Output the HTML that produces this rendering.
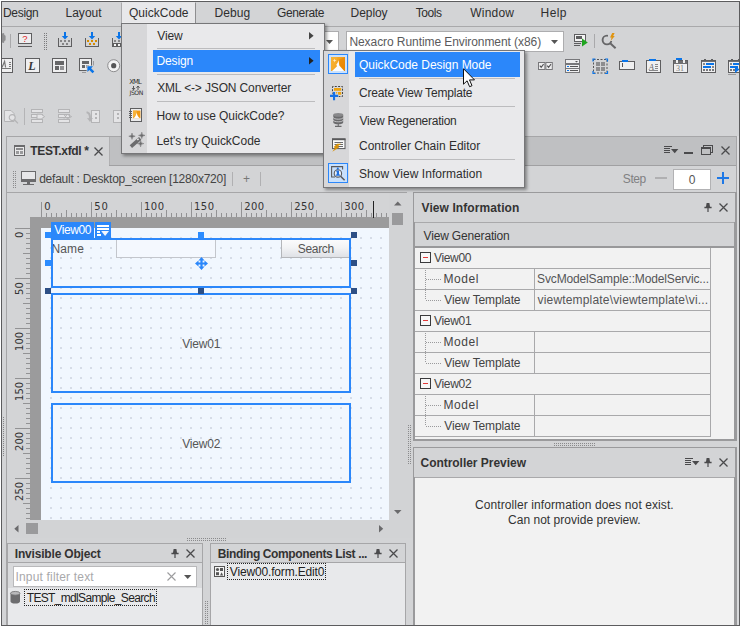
<!DOCTYPE html>
<html lang="en"><head><meta charset="utf-8"><title>Nexacro Studio - QuickCode</title>
<style>
html,body{margin:0;padding:0;}
body{width:740px;height:626px;overflow:hidden;background:#d3d4d6;position:relative;font-family:"Liberation Sans", sans-serif;}
#r{position:absolute;left:0;top:0;width:740px;height:626px;overflow:hidden;}
#r div,#r span.t,#r svg{position:absolute;box-sizing:content-box;}
#r span.t{white-space:nowrap;display:block;}
#r svg{overflow:visible;}
</style></head>
<body><div id="r">
<div style="left:0px;top:26px;width:740px;height:1px;background:#a9a9ab;"></div>
<div style="left:121px;top:2px;width:75px;height:21px;background:#e8e8ea;border-left:1px solid #a9a9ab;border-right:1px solid #8e8e90;border-top:1px solid #e4e4e6;width:73px;height:20px"></div>
<div style="left:122px;top:22px;width:73px;height:1px;background:#f0f0f2;"></div>
<span class="t" style="left:3.02px;top:5px;font-size:12px;line-height:16px;font-weight:400;color:#2e2e2e;letter-spacing:-0.319px;">Design</span>
<span class="t" style="left:65.42px;top:5px;font-size:12px;line-height:16px;font-weight:400;color:#2e2e2e;letter-spacing:0.048px;">Layout</span>
<span class="t" style="left:129.03px;top:5px;font-size:12px;line-height:16px;font-weight:400;color:#2e2e2e;letter-spacing:0.016px;">QuickCode</span>
<span class="t" style="left:214.42px;top:5px;font-size:12px;line-height:16px;font-weight:400;color:#2e2e2e;letter-spacing:0.096px;">Debug</span>
<span class="t" style="left:277.00px;top:5px;font-size:12px;line-height:16px;font-weight:400;color:#2e2e2e;letter-spacing:-0.359px;">Generate</span>
<span class="t" style="left:350.62px;top:5px;font-size:12px;line-height:16px;font-weight:400;color:#2e2e2e;letter-spacing:-0.070px;">Deploy</span>
<span class="t" style="left:415.73px;top:5px;font-size:12px;line-height:16px;font-weight:400;color:#2e2e2e;letter-spacing:-0.428px;">Tools</span>
<span class="t" style="left:470.35px;top:5px;font-size:12px;line-height:16px;font-weight:400;color:#2e2e2e;letter-spacing:0.187px;">Window</span>
<span class="t" style="left:540.62px;top:5px;font-size:12px;line-height:16px;font-weight:400;color:#2e2e2e;letter-spacing:0.400px;">Help</span>
<svg style="left:2px;top:33px;" width="4" height="10" viewBox="0 0 4 10"><path d="M0 0.5L2 0L2.4 2L3.6 2.8V7.2L2.4 8L2 10L0 9.5Z" fill="#8f8f91"/></svg>
<div style="left:10px;top:34px;width:1px;height:14px;background:#a9a9ab;"></div>
<div style="left:18px;top:33px;width:12px;height:9px;background:#efeff0;border:1px solid #5e5e60;"></div>
<span class="t" style="left:22.21px;top:32px;font-size:9.5px;line-height:13px;font-weight:400;color:#e02828;letter-spacing:0.000px;">?</span>
<div style="left:18px;top:46px;width:14px;height:1px;background:#5e5e60;"></div>
<svg style="left:44px;top:33px" width="4" height="18" viewBox="0 0 4 18"><defs><pattern id="tg1" width="2" height="2" patternUnits="userSpaceOnUse"><rect width="1" height="1" fill="#7a7a7c"/></pattern></defs><rect width="4" height="18" fill="url(#tg1)" shape-rendering="crispEdges"/></svg>
<svg style="left:58px;top:32px;" width="14" height="15" viewBox="0 0 14 15"><path d="M0.5 6V14.5H13.5V6" fill="none" stroke="#5e5e60" stroke-width="1" shape-rendering="crispEdges"/><path d="M6 0H8V4H10.2L7 7.4L3.8 4H6Z" fill="#0a74e8"/><rect x="2" y="8" width="2" height="2" fill="#858587" shape-rendering="crispEdges"/><rect x="6" y="8" width="2" height="2" fill="#858587" shape-rendering="crispEdges"/><rect x="10" y="8" width="2" height="2" fill="#858587" shape-rendering="crispEdges"/><rect x="4" y="11" width="2" height="2" fill="#858587" shape-rendering="crispEdges"/><rect x="8" y="11" width="2" height="2" fill="#858587" shape-rendering="crispEdges"/></svg>
<svg style="left:85px;top:32px;" width="14" height="15" viewBox="0 0 14 15"><path d="M0.5 6V14.5H13.5V6" fill="none" stroke="#5e5e60" stroke-width="1" shape-rendering="crispEdges"/><path d="M6 0H8V4H10.2L7 7.4L3.8 4H6Z" fill="#0a74e8"/><rect x="2" y="8" width="2" height="2" fill="#d68c00" shape-rendering="crispEdges"/><rect x="6" y="8" width="2" height="2" fill="#d68c00" shape-rendering="crispEdges"/><rect x="10" y="8" width="2" height="2" fill="#d68c00" shape-rendering="crispEdges"/><rect x="4" y="11" width="2" height="2" fill="#d68c00" shape-rendering="crispEdges"/><rect x="8" y="11" width="2" height="2" fill="#d68c00" shape-rendering="crispEdges"/></svg>
<svg style="left:112px;top:32px;" width="14" height="15" viewBox="0 0 14 15"><path d="M0.5 6V14.5H13.5V6" fill="none" stroke="#5e5e60" stroke-width="1" shape-rendering="crispEdges"/><path d="M6 0H8V4H10.2L7 7.4L3.8 4H6Z" fill="#0a74e8"/><rect x="2" y="8" width="2" height="2" fill="#858587" shape-rendering="crispEdges"/><rect x="6" y="8" width="2" height="2" fill="#858587" shape-rendering="crispEdges"/><rect x="10" y="8" width="2" height="2" fill="#858587" shape-rendering="crispEdges"/><rect x="0" y="11" width="14" height="4" fill="#5e5e60" shape-rendering="crispEdges"/><rect x="2" y="12" width="2" height="2" fill="#f4f4f4" shape-rendering="crispEdges"/><rect x="6" y="12" width="2" height="2" fill="#f4f4f4" shape-rendering="crispEdges"/><rect x="10" y="12" width="2" height="2" fill="#f4f4f4" shape-rendering="crispEdges"/></svg>
<div style="left:300px;top:31px;width:37px;height:19px;background:#fff;border:1px solid #adadaf;"></div>
<svg style="left:326px;top:40px;" width="7" height="4" viewBox="0 0 7 4"><path d="M0 0H7L3.5 4Z" fill="#555"/></svg>
<div style="left:346px;top:31px;width:216px;height:19px;background:#fff;border:1px solid #adadaf;"></div>
<span class="t" style="left:349.42px;top:34px;font-size:12px;line-height:16px;font-weight:400;color:#5a5a5c;letter-spacing:-0.073px;">Nexacro Runtime Environment (x86)</span>
<svg style="left:551px;top:40px;" width="7" height="4" viewBox="0 0 7 4"><path d="M0 0H7L3.5 4Z" fill="#555"/></svg>
<svg style="left:574px;top:34px;" width="14" height="13" viewBox="0 0 14 13"><rect x="0.5" y="0.5" width="11" height="7" fill="#f4f4f4" stroke="#5e5e60" shape-rendering="crispEdges"/><rect x="2" y="2" width="6" height="3" fill="#5e5e60" shape-rendering="crispEdges"/><rect x="0" y="9" width="7" height="1" fill="#5e5e60" shape-rendering="crispEdges"/><rect x="0" y="11" width="6" height="1" fill="#5e5e60" shape-rendering="crispEdges"/><path d="M8 4.6L13.8 8.6L8 12.6Z" fill="#1fa51f"/></svg>
<div style="left:594px;top:34px;width:1px;height:14px;background:#a9a9ab;"></div>
<svg style="left:601px;top:33px;" width="16" height="16" viewBox="0 0 16 16"><circle cx="6" cy="7" r="4.4" fill="none" stroke="#666668" stroke-width="1.9"/><path d="M9.2 10.2L14.6 15.2" stroke="#666668" stroke-width="2"/><rect x="7" y="0" width="7" height="8" fill="#d3d4d6"/><path d="M11.2 0H13.6L12.2 3H13.8L9.6 8L10.6 4.4H9Z" fill="#e09410"/></svg>
<div style="left:2px;top:58px;width:10px;height:13px;border:1px solid #5e5e60;border-left:none;background:#efeff0;"></div>
<svg style="left:2px;top:58px;" width="11" height="15" viewBox="0 0 11 15"><path d="M0 9.5L2.6 3.4L3.6 9.5" fill="none" stroke="#777" stroke-width="1.2"/><path d="M6.5 4.5H9M6.5 6.5H9M6.5 8.5H9M0 10.5H9" stroke="#777" stroke-width="1" shape-rendering="crispEdges"/></svg>
<div style="left:25px;top:58px;width:13px;height:13px;background:#efeff0;border:1px solid #5e5e60;"></div>
<span class="t" style="left:28.30px;top:58px;font-size:12px;line-height:16px;font-weight:700;color:#38383a;letter-spacing:0.000px;font-family:'Liberation Serif',serif;font-style:italic;">L</span>
<div style="left:52px;top:58px;width:13px;height:13px;background:#efeff0;border:1px solid #5e5e60;"></div>
<svg style="left:52px;top:58px;" width="15" height="15" viewBox="0 0 15 15"><rect x="3" y="3" width="9" height="4" fill="#666668" shape-rendering="crispEdges"/><rect x="3" y="8" width="4" height="4" fill="#666668" shape-rendering="crispEdges"/><rect x="8" y="8" width="4" height="4" fill="#929294" shape-rendering="crispEdges"/></svg>
<div style="left:79px;top:58px;width:11px;height:11px;background:#efeff0;border:1px solid #5e5e60;"></div>
<svg style="left:79px;top:58px;" width="16" height="16" viewBox="0 0 16 16"><rect x="3" y="3" width="7" height="3" fill="#666668" shape-rendering="crispEdges"/><rect x="3" y="7" width="3" height="3" fill="#666668" shape-rendering="crispEdges"/><rect x="7" y="7" width="3" height="3" fill="#929294" shape-rendering="crispEdges"/><path d="M14.5 3V8M3 14.5H7" stroke="#9a9a9c" stroke-width="1" shape-rendering="crispEdges"/><path d="M8.4 8.3H14L12.1 10.2L15.3 13.4L13.5 15.2L10.3 12L8.4 13.9Z" fill="#0a74e8" stroke="#d3d4d6" stroke-width="1.6" paint-order="stroke"/></svg>
<svg style="left:107px;top:59px;" width="14" height="14" viewBox="0 0 14 14"><circle cx="6.7" cy="6.7" r="6" fill="#f2f2f3" stroke="#8d8d8f" stroke-width="1"/><circle cx="6.7" cy="6.7" r="2.6" fill="#555557"/></svg>
<svg style="left:538px;top:62px;" width="15" height="8" viewBox="0 0 15 8"><rect x="0.5" y="0.5" width="6.4" height="7" fill="#efeff0" stroke="#77777a"/><rect x="7.9" y="0.5" width="6.4" height="7" fill="#efeff0" stroke="#77777a"/><path d="M1.8 3.6L3.2 5.4L5.6 2.2M9.2 3.6L10.6 5.4L13 2.2" fill="none" stroke="#555557" stroke-width="1.1"/></svg>
<svg style="left:565px;top:59px;" width="15" height="14" viewBox="0 0 15 14"><rect x="0.5" y="0.5" width="14" height="4" fill="#efeff0" stroke="#77777a" shape-rendering="crispEdges"/><rect x="0.5" y="5.5" width="14" height="4" fill="#efeff0" stroke="#77777a" shape-rendering="crispEdges"/><rect x="0.5" y="9.5" width="14" height="4" fill="#efeff0" stroke="#77777a" shape-rendering="crispEdges"/><path d="M10 2H13L11.5 3.6Z" fill="#555557"/><rect x="2" y="7" width="2" height="1" fill="#0a74e8" shape-rendering="crispEdges"/><rect x="5" y="7" width="8" height="1" fill="#555557" shape-rendering="crispEdges"/><rect x="2" y="11" width="2" height="1" fill="#0a74e8" shape-rendering="crispEdges"/><rect x="5" y="11" width="8" height="1" fill="#555557" shape-rendering="crispEdges"/></svg>
<svg style="left:593px;top:59px;" width="15" height="15" viewBox="0 0 15 15"><rect x="0.5" y="0.5" width="13.5" height="13.5" fill="none" stroke="#555557" stroke-width="1" stroke-dasharray="2 1.5"/><path d="M0 2.4V0H2.4M12.1 0H14.5V2.4M14.5 12.1V14.5H12.1M2.4 14.5H0V12.1" fill="none" stroke="#0a74e8" stroke-width="1.2"/><rect x="2.6" y="2.6" width="4" height="4" fill="#8d8d8f" shape-rendering="crispEdges"/><rect x="8" y="2.6" width="4" height="4" fill="#8d8d8f" shape-rendering="crispEdges"/><rect x="2.6" y="8" width="4" height="4" fill="#8d8d8f" shape-rendering="crispEdges"/><rect x="8" y="8" width="4" height="4" fill="#8d8d8f" shape-rendering="crispEdges"/></svg>
<div style="left:619px;top:61px;width:14px;height:7px;background:#efeff0;border:1px solid #5e5e60;"></div>
<div style="left:622px;top:60px;width:6px;height:2px;background:#0a74e8;"></div>
<div style="left:622px;top:63px;width:1px;height:4px;background:#555557;"></div>
<div style="left:646px;top:60px;width:13px;height:11px;background:#efeff0;border:1px solid #5e5e60;"></div>
<div style="left:649px;top:59px;width:7px;height:2px;background:#0a74e8;"></div>
<span class="t" style="left:648.70px;top:61px;font-size:8.5px;line-height:12px;font-weight:400;color:#6a6a6c;letter-spacing:0.000px;font-family:'Liberation Serif',serif;font-style:italic;">A</span>
<svg style="left:646px;top:60px;" width="15" height="13" viewBox="0 0 15 13"><path d="M9 4.5H12M9 6.5H12M9 8.5H12M3 10.5H12" stroke="#88888a" stroke-width="1" shape-rendering="crispEdges"/></svg>
<div style="left:673px;top:60px;width:13px;height:11px;background:#efeff0;border:1px solid #5e5e60;"></div>
<div style="left:674px;top:61px;width:13px;height:3px;background:#707072;"></div>
<div style="left:676px;top:58px;width:6px;height:2px;background:#0a74e8;"></div>
<div style="left:676px;top:60px;width:2px;height:3px;background:#f0f0f0;"></div>
<div style="left:683px;top:60px;width:2px;height:3px;background:#f0f0f0;"></div>
<span class="t" style="left:676.10px;top:63px;font-size:8px;line-height:11px;font-weight:400;color:#77777a;letter-spacing:0.000px;font-family:'Liberation Serif',serif;">31</span>
<div style="left:701px;top:60px;width:13px;height:11px;background:#efeff0;border:1px solid #5e5e60;"></div>
<div style="left:702px;top:61px;width:13px;height:1px;background:#707072;"></div>
<div style="left:704px;top:59px;width:2px;height:2px;background:#5e5e60;"></div>
<div style="left:711px;top:59px;width:2px;height:2px;background:#5e5e60;"></div>
<div style="left:706px;top:63px;width:8px;height:2px;background:#0a74e8;"></div>
<div style="left:703px;top:66px;width:8px;height:2px;background:#0a74e8;"></div>
<div style="left:703px;top:63px;width:2px;height:2px;background:#88888a;"></div>
<div style="left:712px;top:66px;width:2px;height:2px;background:#88888a;"></div>
<div style="left:703px;top:69px;width:2px;height:2px;background:#77777a;"></div>
<div style="left:706px;top:69px;width:2px;height:2px;background:#77777a;"></div>
<div style="left:709px;top:69px;width:2px;height:2px;background:#77777a;"></div>
<div style="left:712px;top:69px;width:2px;height:2px;background:#77777a;"></div>
<div style="left:728px;top:60px;width:13px;height:11px;background:#efeff0;border:1px solid #5e5e60;"></div>
<div style="left:729px;top:61px;width:13px;height:1px;background:#707072;"></div>
<div style="left:731px;top:59px;width:2px;height:2px;background:#5e5e60;"></div>
<div style="left:738px;top:59px;width:2px;height:2px;background:#5e5e60;"></div>
<div style="left:733px;top:63px;width:8px;height:2px;background:#0a74e8;"></div>
<div style="left:730px;top:66px;width:8px;height:2px;background:#0a74e8;"></div>
<div style="left:730px;top:63px;width:2px;height:2px;background:#88888a;"></div>
<div style="left:739px;top:66px;width:2px;height:2px;background:#88888a;"></div>
<div style="left:730px;top:69px;width:2px;height:2px;background:#77777a;"></div>
<div style="left:733px;top:69px;width:2px;height:2px;background:#77777a;"></div>
<div style="left:736px;top:69px;width:2px;height:2px;background:#77777a;"></div>
<div style="left:739px;top:69px;width:2px;height:2px;background:#77777a;"></div>
<div style="left:728px;top:74px;width:8px;height:1px;background:#9a9a9c;"></div>
<svg style="left:734px;top:66px;" width="6" height="7" viewBox="0 0 6 7"><path d="M1 0L5.5 3.5L1 7Z" fill="#0a74e8"/></svg>
<svg style="left:4px;top:109px;" width="15" height="15" viewBox="0 0 15 15"><path d="M0.5 1.5H7L10 4.5V12.5H0.5Z" fill="#e4e4e6" stroke="#b4b4b6"/><circle cx="8.2" cy="8.6" r="3" fill="#e4e4e6" stroke="#b4b4b6" stroke-width="1.1"/><path d="M10.4 10.8L14 14.4" stroke="#b4b4b6" stroke-width="1.3"/></svg>
<div style="left:24px;top:108px;width:1px;height:17px;background:#b4b4b6;"></div>
<svg style="left:31px;top:109px;" width="15" height="14" viewBox="0 0 15 14"><rect x="0.5" y="0.5" width="11" height="3" fill="#e4e4e6" stroke="#b4b4b6" shape-rendering="crispEdges"/><rect x="0.5" y="5.5" width="11" height="3" fill="#e4e4e6" stroke="#b4b4b6" shape-rendering="crispEdges"/><rect x="0.5" y="10.5" width="11" height="3" fill="#e4e4e6" stroke="#b4b4b6" shape-rendering="crispEdges"/><path d="M6 5.2H10.2L13.6 7.6L10.2 10H6Z" fill="#e4e4e6" stroke="#b4b4b6"/></svg>
<svg style="left:58px;top:109px;" width="15" height="14" viewBox="0 0 15 14"><rect x="0.5" y="0.5" width="11" height="3" fill="#e4e4e6" stroke="#b4b4b6" shape-rendering="crispEdges"/><rect x="0.5" y="5.5" width="11" height="3" fill="#e4e4e6" stroke="#b4b4b6" shape-rendering="crispEdges"/><rect x="0.5" y="10.5" width="11" height="3" fill="#e4e4e6" stroke="#b4b4b6" shape-rendering="crispEdges"/><path d="M6 5.6L9 9.6M9 5.6L6 9.6M9 5.2L13.6 7.6L9 10" fill="none" stroke="#b4b4b6"/></svg>
<svg style="left:86px;top:110px;" width="14" height="13" viewBox="0 0 14 13"><rect x="5.5" y="0.5" width="7.5" height="12" fill="#e4e4e6" stroke="#b4b4b6" shape-rendering="crispEdges"/><path d="M0.5 1.5C3.5 1.5 5 3.6 5 8.2L7 8L4 12L1 8L3 8.2C3 5 2.4 3.4 0.5 3.2Z" fill="#b4b4b6"/><rect x="9" y="3" width="2" height="2" fill="#b4b4b6"/><rect x="9" y="7" width="2" height="2" fill="#b4b4b6"/></svg>
<svg style="left:113px;top:110px;" width="9" height="13" viewBox="0 0 9 13"><rect x="0.5" y="0.5" width="9" height="12" fill="#e4e4e6" stroke="#b4b4b6" shape-rendering="crispEdges"/><rect x="4" y="3" width="2" height="2" fill="#b4b4b6"/><rect x="4" y="7" width="2" height="2" fill="#b4b4b6"/></svg>
<div style="left:6px;top:136px;width:731px;height:1px;background:#a6a6a8;"></div>
<div style="left:6px;top:136px;width:1px;height:490px;background:#a6a6a8;"></div>
<div style="left:110px;top:137px;width:627px;height:29px;background:#bfc0c2;"></div>
<div style="left:109px;top:137px;width:1px;height:29px;background:#b0b0b2;"></div>
<div style="left:109px;top:165px;width:628px;height:1px;background:#a0a0a2;"></div>
<div style="left:736px;top:136px;width:1px;height:57px;background:#a6a6a8;"></div>
<div style="left:737px;top:136px;width:2px;height:57px;background:#dcdcde;"></div>
<div style="left:7px;top:192px;width:400px;height:1px;background:#a6a6a8;"></div>
<span class="t" style="left:30.27px;top:143px;font-size:12px;line-height:16px;font-weight:700;color:#333;letter-spacing:-0.327px;">TEST.xfdl *</span>
<div style="left:14px;top:145px;width:9px;height:9px;background:#e9e9ea;border:1px solid #6a6a6c;"></div>
<div style="left:14px;top:146px;width:11px;height:1px;background:#6a6a6c;"></div>
<div style="left:16px;top:148px;width:7px;height:2px;background:#8a8a8c;"></div>
<div style="left:16px;top:151px;width:3px;height:3px;background:#9a9a9c;"></div>
<div style="left:20px;top:151px;width:3px;height:3px;background:#9a9a9c;"></div>
<svg style="left:93.8px;top:146.8px;" width="9" height="9" viewBox="0 0 9 9"><path d="M0.5 0.5L8.5 8.5M8.5 0.5L0.5 8.5" stroke="#4a4a4c" stroke-width="1.25" fill="none"/></svg>
<div style="left:21px;top:171px;width:13px;height:9px;background:#e7e7e9;border:1px solid #6a6a6c;"></div>
<div style="left:21px;top:179px;width:15px;height:2px;background:#6a6a6c;"></div>
<div style="left:27px;top:182px;width:3px;height:2px;background:#6a6a6c;"></div>
<div style="left:23px;top:184px;width:11px;height:1px;background:#6a6a6c;"></div>
<svg style="left:664px;top:146px;" width="15" height="8" viewBox="0 0 15 8"><path d="M0 0.5H8M0 2.5H6M0 4.5H6M0 6.5H6" stroke="#4a4a4c" stroke-width="1" shape-rendering="crispEdges" fill="none"/><path d="M7 3H14.4L10.7 7.2Z" fill="#4a4a4c"/></svg>
<div style="left:684px;top:152px;width:9px;height:2px;background:#4a4a4c;"></div>
<svg style="left:701px;top:145px;" width="12" height="10" viewBox="0 0 12 10"><path d="M2.5 2V0.5H11.5V7.5H10" fill="none" stroke="#4a4a4c" stroke-width="1" shape-rendering="crispEdges"/><rect x="0.5" y="2.5" width="9" height="7" fill="none" stroke="#4a4a4c" stroke-width="1" shape-rendering="crispEdges"/><rect x="0" y="2" width="10" height="2" fill="#4a4a4c" shape-rendering="crispEdges"/></svg>
<svg style="left:721px;top:146px;" width="9" height="9" viewBox="0 0 9 9"><path d="M0.5 0.5L8.5 8.5M8.5 0.5L0.5 8.5" stroke="#4a4a4c" stroke-width="1.25" fill="none"/></svg>
<span class="t" style="left:39.20px;top:171px;font-size:12px;line-height:16px;font-weight:400;color:#444;letter-spacing:-0.247px;">default : Desktop_screen [1280x720]</span>
<div style="left:232px;top:172px;width:1px;height:14px;background:#b0b0b2;"></div>
<div style="left:260px;top:172px;width:1px;height:14px;background:#b0b0b2;"></div>
<span class="t" style="left:242.91px;top:171px;font-size:12px;line-height:16px;font-weight:400;color:#777;letter-spacing:0.000px;">+</span>
<span class="t" style="left:622.86px;top:171px;font-size:12px;line-height:16px;font-weight:400;color:#808082;letter-spacing:-0.480px;">Step</span>
<div style="left:655px;top:177px;width:12px;height:2px;background:#b0b0b2;"></div>
<div style="left:673px;top:169px;width:36px;height:19px;background:#fff;border:1px solid #b2b2b4;"></div>
<span class="t" style="left:688.83px;top:172px;font-size:12px;line-height:16px;font-weight:400;color:#555;letter-spacing:0.000px;">0</span>
<div style="left:717px;top:177px;width:12px;height:2px;background:#1e78e6;"></div>
<div style="left:722px;top:172px;width:2px;height:12px;background:#1e78e6;"></div>
<svg style="left:0px;top:0px;" width="740" height="626" viewBox="0 0 740 626"><path d="M41.5 202V217M46.5 213V217M51.5 213V217M56.5 213V217M61.5 213V217M66.5 210V217M71.5 213V217M76.5 213V217M81.5 213V217M86.5 213V217M91.5 202V217M96.5 213V217M101.5 213V217M106.5 213V217M111.5 213V217M116.5 210V217M121.5 213V217M126.5 213V217M131.5 213V217M136.5 213V217M141.5 202V217M146.5 213V217M151.5 213V217M156.5 213V217M161.5 213V217M166.5 210V217M171.5 213V217M176.5 213V217M181.5 213V217M186.5 213V217M191.5 202V217M196.5 213V217M201.5 213V217M206.5 213V217M211.5 213V217M216.5 210V217M221.5 213V217M226.5 213V217M231.5 213V217M236.5 213V217M241.5 202V217M246.5 213V217M251.5 213V217M256.5 213V217M261.5 213V217M266.5 210V217M271.5 213V217M276.5 213V217M281.5 213V217M286.5 213V217M291.5 202V217M296.5 213V217M301.5 213V217M306.5 213V217M311.5 213V217M316.5 210V217M321.5 213V217M326.5 213V217M331.5 213V217M336.5 213V217M341.5 202V217M346.5 213V217M351.5 213V217M356.5 213V217M361.5 213V217M366.5 210V217M371.5 213V217M376.5 213V217M381.5 213V217M386.5 213V217M15 228.5H30M26 233.5H30M26 238.5H30M26 243.5H30M26 248.5H30M23 253.5H30M26 258.5H30M26 263.5H30M26 268.5H30M26 273.5H30M15 278.5H30M26 283.5H30M26 288.5H30M26 293.5H30M26 298.5H30M23 303.5H30M26 308.5H30M26 313.5H30M26 318.5H30M26 323.5H30M15 328.5H30M26 333.5H30M26 338.5H30M26 343.5H30M26 348.5H30M23 353.5H30M26 358.5H30M26 363.5H30M26 368.5H30M26 373.5H30M15 378.5H30M26 383.5H30M26 388.5H30M26 393.5H30M26 398.5H30M23 403.5H30M26 408.5H30M26 413.5H30M26 418.5H30M26 423.5H30M15 428.5H30M26 433.5H30M26 438.5H30M26 443.5H30M26 448.5H30M23 453.5H30M26 458.5H30M26 463.5H30M26 468.5H30M26 473.5H30M15 478.5H30M26 483.5H30M26 488.5H30M26 493.5H30M26 498.5H30M23 503.5H30M26 508.5H30M26 513.5H30M26 518.5H30" stroke="#929294" stroke-width="1" fill="none" shape-rendering="crispEdges"/></svg>
<span class="t" style="left:44.34px;top:200px;font-size:10px;line-height:13px;font-weight:400;color:#333;letter-spacing:0.000px;font-family:'DejaVu Sans',sans-serif;">0</span>
<span class="t" style="left:94.23px;top:200px;font-size:10px;line-height:13px;font-weight:400;color:#333;letter-spacing:0.801px;font-family:'DejaVu Sans',sans-serif;">50</span>
<span class="t" style="left:143.90px;top:200px;font-size:10px;line-height:13px;font-weight:400;color:#333;letter-spacing:0.584px;font-family:'DejaVu Sans',sans-serif;">100</span>
<span class="t" style="left:193.90px;top:200px;font-size:10px;line-height:13px;font-weight:400;color:#333;letter-spacing:0.584px;font-family:'DejaVu Sans',sans-serif;">150</span>
<span class="t" style="left:244.27px;top:200px;font-size:10px;line-height:13px;font-weight:400;color:#333;letter-spacing:0.401px;font-family:'DejaVu Sans',sans-serif;">200</span>
<span class="t" style="left:294.27px;top:200px;font-size:10px;line-height:13px;font-weight:400;color:#333;letter-spacing:0.401px;font-family:'DejaVu Sans',sans-serif;">250</span>
<span class="t" style="left:344.24px;top:200px;font-size:10px;line-height:13px;font-weight:400;color:#333;letter-spacing:0.416px;font-family:'DejaVu Sans',sans-serif;">300</span>
<span class="t" style="left:13px;top:238.10px;font-size:10px;line-height:13px;font-family:'DejaVu Sans',sans-serif;color:#333;letter-spacing:0.025px;transform-origin:0 0;transform:rotate(-90deg);">0</span>
<span class="t" style="left:13px;top:294.50px;font-size:10px;line-height:13px;font-family:'DejaVu Sans',sans-serif;color:#333;letter-spacing:0.033px;transform-origin:0 0;transform:rotate(-90deg);">50</span>
<span class="t" style="left:13px;top:350.90px;font-size:10px;line-height:13px;font-family:'DejaVu Sans',sans-serif;color:#333;letter-spacing:0.035px;transform-origin:0 0;transform:rotate(-90deg);">100</span>
<span class="t" style="left:13px;top:400.90px;font-size:10px;line-height:13px;font-family:'DejaVu Sans',sans-serif;color:#333;letter-spacing:0.035px;transform-origin:0 0;transform:rotate(-90deg);">150</span>
<span class="t" style="left:13px;top:450.90px;font-size:10px;line-height:13px;font-family:'DejaVu Sans',sans-serif;color:#333;letter-spacing:0.035px;transform-origin:0 0;transform:rotate(-90deg);">200</span>
<span class="t" style="left:13px;top:500.90px;font-size:10px;line-height:13px;font-family:'DejaVu Sans',sans-serif;color:#333;letter-spacing:0.035px;transform-origin:0 0;transform:rotate(-90deg);">250</span>
<div style="left:30px;top:217px;width:359px;height:11px;background:#9b9b9c;"></div>
<div style="left:30px;top:217px;width:11px;height:303px;background:#9b9b9c;"></div>
<div style="left:373px;top:201px;width:1px;height:17px;background:#222;"></div>
<div style="left:41px;top:228px;width:348px;height:292px;background:#f1f7fe;"></div>
<svg style="left:41px;top:228px;" width="348" height="292" viewBox="0 0 348 292"><defs><pattern id="dots" x="-1" y="-1" width="10" height="10" patternUnits="userSpaceOnUse"><rect x="0" y="0" width="2" height="2" fill="#d6dce7"/></pattern></defs><rect x="1" y="1" width="347" height="291" fill="url(#dots)" shape-rendering="crispEdges"/></svg>
<div style="left:116px;top:240px;width:100px;height:18px;background:#f4f8fe;border:1px solid #c3c6cc;border-top:none;width:98px;height:17px;box-sizing:content-box"></div>
<span class="t" style="left:51.42px;top:241px;font-size:12px;line-height:16px;font-weight:400;color:#555;letter-spacing:0.167px;">Name</span>
<div style="left:281px;top:239px;width:67px;height:17px;border:1px solid #b4b6ba;background:linear-gradient(#fbfbfc,#f2f3f5 45%,#dfe1e6);"></div>
<span class="t" style="left:297.86px;top:241px;font-size:12px;line-height:16px;font-weight:400;color:#555;letter-spacing:-0.341px;">Search</span>
<div style="left:51px;top:238px;width:296px;height:46px;border:2px solid #2b87fa;"></div>
<div style="left:51px;top:293px;width:296px;height:96px;border:2px solid #2b87fa;"></div>
<div style="left:51px;top:403px;width:296px;height:76px;border:2px solid #2b87fa;"></div>
<span class="t" style="left:182.15px;top:336px;font-size:12px;line-height:16px;font-weight:400;color:#555;letter-spacing:-0.180px;">View01</span>
<span class="t" style="left:182.15px;top:436px;font-size:12px;line-height:16px;font-weight:400;color:#555;letter-spacing:-0.177px;">View02</span>
<div style="left:51px;top:222px;width:43px;height:16px;background:#2b87fa;"></div>
<span class="t" style="left:54.35px;top:222px;font-size:12px;line-height:16px;font-weight:400;color:#fff;letter-spacing:-0.404px;">View00</span>
<div style="left:95px;top:222px;width:16px;height:16px;background:#2b87fa;"></div>
<svg style="left:95px;top:222px;" width="16" height="16" viewBox="0 0 16 16"><path d="M2 3H14V5H2ZM2 6H14V8H2ZM2 9H5V11H2ZM2 12H6V14H2Z" fill="#fff" shape-rendering="crispEdges"/><path d="M6.2 9H14L10.1 14Z" fill="#f2f7fe"/></svg>
<div style="left:45px;top:232px;width:6px;height:6px;background:#2b8cff;"></div>
<div style="left:198px;top:232px;width:6px;height:6px;background:#2b8cff;"></div>
<div style="left:45px;top:260px;width:6px;height:6px;background:#2b8cff;"></div>
<div style="left:45px;top:288px;width:6px;height:6px;background:#2d4f85;"></div>
<div style="left:198px;top:288px;width:6px;height:6px;background:#2d4f85;"></div>
<div style="left:351px;top:232px;width:6px;height:6px;background:#2d4f85;"></div>
<div style="left:351px;top:260px;width:6px;height:6px;background:#2d4f85;"></div>
<div style="left:351px;top:288px;width:6px;height:6px;background:#2d4f85;"></div>
<svg style="left:195px;top:257px;" width="13" height="13" viewBox="0 0 13 13"><path d="M6.5 0L9.5 3.5H7.6V5.4H9.5V3.5L13 6.5L9.5 9.5V7.6H7.6V9.5H9.5L6.5 13L3.5 9.5H5.4V7.6H3.5V9.5L0 6.5L3.5 3.5V5.4H5.4V3.5H3.5Z" fill="#2b87fa"/></svg>
<div style="left:389px;top:193px;width:24px;height:345px;background:#d2d3d5;"></div>
<div style="left:7px;top:520px;width:406px;height:18px;background:#d2d3d5;"></div>
<svg style="left:394px;top:200.6px;" width="8" height="5" viewBox="0 0 8 5"><path d="M0 4.5L3.75 0.5L7.5 4.5Z" fill="#6a6a6c"/></svg>
<div style="left:392px;top:213px;width:11px;height:12px;background:#9a9a9c;"></div>
<svg style="left:394px;top:510px;" width="8" height="5" viewBox="0 0 8 5"><path d="M0 0L7.5 0L3.75 4Z" fill="#6a6a6c"/></svg>
<svg style="left:14px;top:525px;" width="5" height="8" viewBox="0 0 5 8"><path d="M4.5 0L4.5 7.5L0.3 3.75Z" fill="#6a6a6c"/></svg>
<div style="left:26px;top:523px;width:12px;height:11px;background:#9a9a9c;"></div>
<svg style="left:379px;top:525px;" width="5" height="8" viewBox="0 0 5 8"><path d="M0 0L4.2 3.75L0 7.5Z" fill="#6a6a6c"/></svg>
<svg style="left:187px;top:538px" width="40" height="4" viewBox="0 0 40 4"><defs><pattern id="hg187" width="2" height="2" patternUnits="userSpaceOnUse"><rect width="1" height="1" fill="#8a8a8c"/></pattern></defs><rect width="40" height="4" fill="url(#hg187)" shape-rendering="crispEdges"/></svg>
<svg style="left:408px;top:425px" width="4" height="40" viewBox="0 0 4 40"><defs><pattern id="vg408_425" width="2" height="2" patternUnits="userSpaceOnUse"><rect width="1" height="1" fill="#8a8a8c"/></pattern></defs><rect width="4" height="40" fill="url(#vg408_425)" shape-rendering="crispEdges"/></svg>
<div style="left:3px;top:417px;width:1px;height:40px;background:repeating-linear-gradient(#858587 0 1px,transparent 1px 2px);"></div>
<svg style="left:205px;top:601px" width="4" height="24" viewBox="0 0 4 24"><defs><pattern id="vg205_601" width="2" height="2" patternUnits="userSpaceOnUse"><rect width="1" height="1" fill="#8a8a8c"/></pattern></defs><rect width="4" height="24" fill="url(#vg205_601)" shape-rendering="crispEdges"/></svg>
<svg style="left:554px;top:443px" width="41" height="4" viewBox="0 0 41 4"><defs><pattern id="hg554" width="2" height="2" patternUnits="userSpaceOnUse"><rect width="1" height="1" fill="#8a8a8c"/></pattern></defs><rect width="41" height="4" fill="url(#hg554)" shape-rendering="crispEdges"/></svg>
<svg style="left:13px;top:171px" width="4" height="18" viewBox="0 0 4 18"><defs><pattern id="vg13_171" width="2" height="2" patternUnits="userSpaceOnUse"><rect width="1" height="1" fill="#8a8a8c"/></pattern></defs><rect width="4" height="18" fill="url(#vg13_171)" shape-rendering="crispEdges"/></svg>
<div style="left:7px;top:543px;width:194px;height:81px;background:#e8e9eb;border:1px solid #a6a6a8;"></div>
<div style="left:8px;top:544px;width:194px;height:19px;background:#d3d4d6;"></div>
<div style="left:8px;top:562px;width:194px;height:1px;background:#a6a6a8;"></div>
<div style="left:8px;top:563px;width:194px;height:25px;background:#d9dadc;"></div>
<span class="t" style="left:14.80px;top:546px;font-size:12px;line-height:16px;font-weight:700;color:#333;letter-spacing:-0.184px;">Invisible Object</span>
<svg style="left:171px;top:549px;" width="8" height="9" viewBox="0 0 8 9"><path d="M2.6 0H5.4L6 3.8H7.6V5.3H4.6V9H3.4V5.3H0.4V3.8H2Z" fill="#4a4a4c"/></svg>
<svg style="left:186px;top:548.5px;" width="9" height="9" viewBox="0 0 9 9"><path d="M0.5 0.5L8.5 8.5M8.5 0.5L0.5 8.5" stroke="#4a4a4c" stroke-width="1.25" fill="none"/></svg>
<div style="left:13px;top:566px;width:182px;height:19px;background:#fff;border:1px solid #b9b9bb;"></div>
<span class="t" style="left:15.49px;top:569px;font-size:12px;line-height:16px;font-weight:400;color:#a9a9ab;letter-spacing:0.176px;">Input filter text</span>
<svg style="left:167px;top:572px;" width="9" height="9" viewBox="0 0 9 9"><path d="M0.5 0.5L8.5 8.5M8.5 0.5L0.5 8.5" stroke="#9c9c9e" stroke-width="1.1" fill="none"/></svg>
<svg style="left:184px;top:575px;" width="8" height="4" viewBox="0 0 8 4"><path d="M0 0H7.4L3.7 4Z" fill="#555"/></svg>
<svg style="left:10px;top:591px;" width="11" height="13" viewBox="0 0 11 13"><path d="M0.5 2.2V10.4C0.5 11.6 2.6 12.5 5.3 12.5S10 11.6 10 10.4V2.2Z" fill="#6d6d6f"/><ellipse cx="5.25" cy="2.3" rx="4.75" ry="1.9" fill="#b9b9bb" stroke="#6d6d6f" stroke-width="0.8"/></svg>
<div style="left:24px;top:589px;width:131px;height:15px;border:1px dotted #222;"></div>
<span class="t" style="left:26.73px;top:590px;font-size:12px;line-height:16px;font-weight:400;color:#222;letter-spacing:-0.661px;">TEST_mdlSample_Search</span>
<div style="left:210px;top:543px;width:194px;height:81px;background:#e8e9eb;border:1px solid #a6a6a8;"></div>
<div style="left:211px;top:544px;width:194px;height:19px;background:#d3d4d6;"></div>
<div style="left:211px;top:562px;width:194px;height:1px;background:#a6a6a8;"></div>
<span class="t" style="left:217.80px;top:546px;font-size:12px;line-height:16px;font-weight:700;color:#333;letter-spacing:-0.373px;">Binding Components List ...</span>
<svg style="left:373.5px;top:549px;" width="8" height="9" viewBox="0 0 8 9"><path d="M2.6 0H5.4L6 3.8H7.6V5.3H4.6V9H3.4V5.3H0.4V3.8H2Z" fill="#4a4a4c"/></svg>
<svg style="left:389px;top:548.5px;" width="9" height="9" viewBox="0 0 9 9"><path d="M0.5 0.5L8.5 8.5M8.5 0.5L0.5 8.5" stroke="#4a4a4c" stroke-width="1.25" fill="none"/></svg>
<svg style="left:214px;top:566px;" width="11" height="11" viewBox="0 0 11 11"><rect x="0.5" y="0.5" width="10" height="10" fill="#f4f4f4" stroke="#555"/><circle cx="3.5" cy="3.5" r="1.6" fill="#555"/><rect x="6" y="2" width="3" height="3" fill="#555"/><rect x="2" y="6.2" width="3" height="3" fill="#555"/><path d="M6 9.4L7.6 6.2L9.2 9.4Z" fill="#555"/></svg>
<div style="left:227px;top:563px;width:97px;height:15px;border:1px dotted #222;"></div>
<span class="t" style="left:229.75px;top:564px;font-size:12px;line-height:16px;font-weight:400;color:#222;letter-spacing:-0.153px;">View00.form.Edit0</span>
<div style="left:413px;top:192px;width:324px;height:249px;background:#9a9a9c;"></div>
<div style="left:415px;top:193px;width:319px;height:246px;background:#f2f2f2;"></div>
<div style="left:414px;top:193px;width:321px;height:29px;background:#d3d4d6;"></div>
<div style="left:415px;top:222px;width:319px;height:1px;background:#a9a9ab;"></div>
<div style="left:415px;top:223px;width:319px;height:23px;background:#d3d4d6;"></div>
<div style="left:415px;top:246px;width:319px;height:2px;background:#98989a;"></div>
<span class="t" style="left:421.52px;top:200px;font-size:12px;line-height:16px;font-weight:700;color:#333;letter-spacing:0.090px;">View Information</span>
<span class="t" style="left:423.55px;top:228px;font-size:12px;line-height:16px;font-weight:400;color:#333;letter-spacing:-0.162px;">View Generation</span>
<svg style="left:704px;top:203px;" width="8" height="9" viewBox="0 0 8 9"><path d="M2.6 0H5.4L6 3.8H7.6V5.3H4.6V9H3.4V5.3H0.4V3.8H2Z" fill="#4a4a4c"/></svg>
<svg style="left:719.4px;top:202.5px;" width="9" height="9" viewBox="0 0 9 9"><path d="M0.5 0.5L8.5 8.5M8.5 0.5L0.5 8.5" stroke="#4a4a4c" stroke-width="1.25" fill="none"/></svg>
<div style="left:415px;top:248px;width:296px;height:189px;background:#f2f2f2;"></div>
<div style="left:415px;top:268px;width:296px;height:1px;background:#a9a9ab;"></div>
<div style="left:415px;top:289px;width:296px;height:1px;background:#a9a9ab;"></div>
<div style="left:415px;top:310px;width:296px;height:1px;background:#a9a9ab;"></div>
<div style="left:415px;top:331px;width:296px;height:1px;background:#a9a9ab;"></div>
<div style="left:415px;top:352px;width:296px;height:1px;background:#a9a9ab;"></div>
<div style="left:415px;top:373px;width:296px;height:1px;background:#a9a9ab;"></div>
<div style="left:415px;top:394px;width:296px;height:1px;background:#a9a9ab;"></div>
<div style="left:415px;top:415px;width:296px;height:1px;background:#a9a9ab;"></div>
<div style="left:415px;top:436px;width:296px;height:1px;background:#a9a9ab;"></div>
<div style="left:710px;top:248px;width:1px;height:189px;background:#a9a9ab;"></div>
<div style="left:534px;top:268px;width:1px;height:42px;background:#a9a9ab;"></div>
<div style="left:420px;top:252px;width:9px;height:9px;border:1px solid #3a3a3c;background:#f7f7f7;"></div>
<div style="left:423px;top:257px;width:5px;height:1px;background:#e23a3a;"></div>
<span class="t" style="left:433.95px;top:250px;font-size:12px;line-height:16px;font-weight:400;color:#444;letter-spacing:-0.324px;">View00</span>
<span class="t" style="left:443.42px;top:271px;font-size:12px;line-height:16px;font-weight:400;color:#444;letter-spacing:0.575px;">Model</span>
<span class="t" style="left:444.35px;top:292px;font-size:12px;line-height:16px;font-weight:400;color:#444;letter-spacing:-0.119px;">View Template</span>
<svg style="left:425px;top:269px;" width="17" height="32" viewBox="0 0 17 32"><path d="M0.5 1V31M1 10.5H16M1 31.5H16" stroke="#9a9a9c" stroke-width="1" stroke-dasharray="1 1" fill="none" shape-rendering="crispEdges"/></svg>
<div style="left:534px;top:331px;width:1px;height:42px;background:#a9a9ab;"></div>
<div style="left:420px;top:315px;width:9px;height:9px;border:1px solid #3a3a3c;background:#f7f7f7;"></div>
<div style="left:423px;top:320px;width:5px;height:1px;background:#e23a3a;"></div>
<span class="t" style="left:433.95px;top:313px;font-size:12px;line-height:16px;font-weight:400;color:#444;letter-spacing:-0.300px;">View01</span>
<span class="t" style="left:443.42px;top:334px;font-size:12px;line-height:16px;font-weight:400;color:#444;letter-spacing:0.575px;">Model</span>
<span class="t" style="left:444.35px;top:355px;font-size:12px;line-height:16px;font-weight:400;color:#444;letter-spacing:-0.119px;">View Template</span>
<svg style="left:425px;top:332px;" width="17" height="32" viewBox="0 0 17 32"><path d="M0.5 1V31M1 10.5H16M1 31.5H16" stroke="#9a9a9c" stroke-width="1" stroke-dasharray="1 1" fill="none" shape-rendering="crispEdges"/></svg>
<div style="left:534px;top:394px;width:1px;height:42px;background:#a9a9ab;"></div>
<div style="left:420px;top:378px;width:9px;height:9px;border:1px solid #3a3a3c;background:#f7f7f7;"></div>
<div style="left:423px;top:383px;width:5px;height:1px;background:#e23a3a;"></div>
<span class="t" style="left:433.95px;top:376px;font-size:12px;line-height:16px;font-weight:400;color:#444;letter-spacing:-0.297px;">View02</span>
<span class="t" style="left:443.42px;top:397px;font-size:12px;line-height:16px;font-weight:400;color:#444;letter-spacing:0.575px;">Model</span>
<span class="t" style="left:444.35px;top:418px;font-size:12px;line-height:16px;font-weight:400;color:#444;letter-spacing:-0.119px;">View Template</span>
<svg style="left:425px;top:395px;" width="17" height="32" viewBox="0 0 17 32"><path d="M0.5 1V31M1 10.5H16M1 31.5H16" stroke="#9a9a9c" stroke-width="1" stroke-dasharray="1 1" fill="none" shape-rendering="crispEdges"/></svg>
<span class="t" style="left:537.06px;top:271px;font-size:12px;line-height:16px;font-weight:400;color:#555557;letter-spacing:-0.139px;">SvcModelSample::ModelServic...</span>
<span class="t" style="left:537.56px;top:292px;font-size:12px;line-height:16px;font-weight:400;color:#555557;letter-spacing:0.171px;">viewtemplate\viewtemplate\vi...</span>
<div style="left:413px;top:447px;width:324px;height:179px;background:#9a9a9c;"></div>
<div style="left:415px;top:448px;width:319px;height:178px;background:#f2f2f2;"></div>
<div style="left:414px;top:448px;width:321px;height:29px;background:#d3d4d6;"></div>
<div style="left:415px;top:477px;width:319px;height:1px;background:#a9a9ab;"></div>
<span class="t" style="left:420.51px;top:455px;font-size:12px;line-height:16px;font-weight:700;color:#333;letter-spacing:-0.033px;">Controller Preview</span>
<svg style="left:685px;top:458px;" width="15" height="8" viewBox="0 0 15 8"><path d="M0 0.5H8M0 2.5H6M0 4.5H6M0 6.5H6" stroke="#4a4a4c" stroke-width="1" shape-rendering="crispEdges" fill="none"/><path d="M7 3H14.4L10.7 7.2Z" fill="#4a4a4c"/></svg>
<svg style="left:704px;top:458px;" width="8" height="9" viewBox="0 0 8 9"><path d="M2.6 0H5.4L6 3.8H7.6V5.3H4.6V9H3.4V5.3H0.4V3.8H2Z" fill="#4a4a4c"/></svg>
<svg style="left:719.4px;top:457.5px;" width="9" height="9" viewBox="0 0 9 9"><path d="M0.5 0.5L8.5 8.5M8.5 0.5L0.5 8.5" stroke="#4a4a4c" stroke-width="1.25" fill="none"/></svg>
<span class="t" style="left:474.99px;top:497px;font-size:12px;line-height:16px;font-weight:400;color:#333;letter-spacing:0.088px;">Controller information does not exist.</span>
<span class="t" style="left:507.99px;top:512px;font-size:12px;line-height:16px;font-weight:400;color:#333;letter-spacing:0.027px;">Can not provide preview.</span>
<div style="left:737px;top:193px;width:2px;height:433px;background:#d9dadc;"></div>
<div style="left:121px;top:23px;width:202px;height:129px;background:#e9e9eb;border:1px solid #767678;box-shadow:2px 2px 3px rgba(0,0,0,0.38);"></div>
<div style="left:122px;top:24px;width:25px;height:129px;background:#d7d7d9;"></div>
<span class="t" style="left:157.35px;top:28px;font-size:12px;line-height:16px;font-weight:400;color:#2e2e2e;letter-spacing:-0.124px;">View</span>
<svg style="left:309px;top:32px;" width="5" height="8" viewBox="0 0 5 8"><path d="M0 0L4.6 3.75L0 7.5Z" fill="#444"/></svg>
<div style="left:157px;top:48px;width:158px;height:1px;background:#bcbcbe;"></div>
<div style="left:153px;top:50px;width:167px;height:22px;background:#2b87fa;"></div>
<span class="t" style="left:156.42px;top:53px;font-size:12px;line-height:16px;font-weight:400;color:#fff;letter-spacing:-0.119px;">Design</span>
<svg style="left:309px;top:57px;" width="5" height="8" viewBox="0 0 5 8"><path d="M0 0L4.6 3.75L0 7.5Z" fill="#222"/></svg>
<div style="left:157px;top:74px;width:158px;height:1px;background:#bcbcbe;"></div>
<span class="t" style="left:157.13px;top:80px;font-size:12px;line-height:16px;font-weight:400;color:#2e2e2e;letter-spacing:-0.137px;">XML &lt;-&gt; JSON Converter</span>
<div style="left:157px;top:101px;width:158px;height:1px;background:#bcbcbe;"></div>
<span class="t" style="left:156.42px;top:108px;font-size:12px;line-height:16px;font-weight:400;color:#2e2e2e;letter-spacing:-0.069px;">How to use QuickCode?</span>
<span class="t" style="left:156.42px;top:133px;font-size:12px;line-height:16px;font-weight:400;color:#2e2e2e;letter-spacing:-0.013px;">Let&#x27;s try QuickCode</span>
<span class="t" style="left:129.20px;top:77px;font-size:6.8px;line-height:10px;font-weight:400;color:#333;letter-spacing:-0.837px;font-family:'DejaVu Sans',sans-serif;">XML</span>
<span class="t" style="left:129.52px;top:88px;font-size:6.2px;line-height:9px;font-weight:400;color:#333;letter-spacing:-0.459px;font-family:'DejaVu Sans',sans-serif;">JSON</span>
<svg style="left:132px;top:85.5px;" width="8" height="4" viewBox="0 0 8 4"><path d="M1.5 0V3.5M0 2L1.5 3.8L3 2M6 0.3V4M4.5 1.8L6 0L7.5 1.8" stroke="#4a4a4c" stroke-width="0.9" fill="none"/></svg>
<svg style="left:129px;top:108px;" width="14" height="14" viewBox="0 0 14 14"><rect x="1.5" y="0.5" width="11" height="13" fill="#ececed" stroke="#5e5e60"/><rect x="4" y="2.6" width="7.4" height="7.6" fill="#f29a12"/><path d="M4 2.6H8L7 6.5L4 10.2Z" fill="#f7b845" opacity="0.8"/><path d="M7.6 4.2C7.9 6.6 8.8 8.4 10.8 10.2H4.6C6.4 8.4 7.3 6.6 7.6 4.2Z" fill="#fff"/><path d="M0 3.5H2.8M0 5.5H2.8M0 7.5H2.8M0 9.5H2.8" stroke="#5e5e60" stroke-width="1" shape-rendering="crispEdges"/></svg>
<svg style="left:129px;top:133px;" width="15" height="15" viewBox="0 0 15 15"><path d="M1.9 13.6L11.2 5.4" stroke="#6c6c6e" stroke-width="3.6" fill="none"/><path d="M8.3 6.9L9.6 5.8" stroke="#ededee" stroke-width="1.5" fill="none"/><path d="M3 0.0Q3 3.2 6.2 3.2Q3 3.2 3 6.4Q3 3.2 -0.20000000000000018 3.2Q3 3.2 3 0.0ZM12.8 -0.8000000000000003Q12.8 2.4 16.0 2.4Q12.8 2.4 12.8 5.6Q12.8 2.4 9.600000000000001 2.4Q12.8 2.4 12.8 -0.8000000000000003ZM11.6 7.3999999999999995Q11.6 10.6 14.8 10.6Q11.6 10.6 11.6 13.8Q11.6 10.6 8.399999999999999 10.6Q11.6 10.6 11.6 7.3999999999999995Z" fill="#6c6c6e" stroke="#6c6c6e" stroke-width="0.5"/></svg>
<div style="left:323px;top:50px;width:200px;height:136px;background:#e9e9eb;border:1px solid #767678;box-shadow:2px 2px 3px rgba(0,0,0,0.38);"></div>
<div style="left:324px;top:51px;width:25px;height:136px;background:#d7d7d9;"></div>
<div style="left:355px;top:52px;width:165px;height:25px;background:#2b87fa;"></div>
<span class="t" style="left:359.03px;top:57px;font-size:12px;line-height:16px;font-weight:400;color:#fff;letter-spacing:-0.045px;">QuickCode Design Mode</span>
<div style="left:359px;top:78px;width:156px;height:1px;background:#bcbcbe;"></div>
<span class="t" style="left:358.99px;top:85px;font-size:12px;line-height:16px;font-weight:400;color:#2e2e2e;letter-spacing:-0.180px;">Create View Template</span>
<div style="left:359px;top:106px;width:156px;height:1px;background:#bcbcbe;"></div>
<span class="t" style="left:359.55px;top:113px;font-size:12px;line-height:16px;font-weight:400;color:#2e2e2e;letter-spacing:-0.247px;">View Regeneration</span>
<span class="t" style="left:358.99px;top:138px;font-size:12px;line-height:16px;font-weight:400;color:#2e2e2e;letter-spacing:-0.008px;">Controller Chain Editor</span>
<div style="left:359px;top:159px;width:156px;height:1px;background:#bcbcbe;"></div>
<span class="t" style="left:359.06px;top:166px;font-size:12px;line-height:16px;font-weight:400;color:#2e2e2e;letter-spacing:0.030px;">Show View Information</span>
<div style="left:328px;top:54px;width:18px;height:18px;border:1px solid #2b87fa;background:#cde2fb;"></div>
<svg style="left:331px;top:57px;" width="14" height="14" viewBox="0 0 14 14"><defs><linearGradient id="og" x1="0" y1="0" x2="1" y2="1"><stop offset="0" stop-color="#f7b030"/><stop offset="1" stop-color="#ee8a00"/></linearGradient></defs><rect width="14" height="14" fill="url(#og)"/><path d="M0 0H6.5L5.4 7.4L6 9L0 14Z" fill="#f6b73a" opacity="0.55"/><path d="M8.2 2.5L14 0V14L8.4 8.6Z" fill="#e87f00" opacity="0.55"/><path d="M7.5 3.2L8.3 8.4L13.2 14H1L6 9.2L5.3 7.6L6.5 6Z" fill="#fafcff"/><path d="M3.6 1.6L4.1 3L5.6 3.5L4.1 4L3.6 5.4L3.1 4L1.6 3.5L3.1 3Z" fill="#fff" opacity="0.75"/></svg>
<svg style="left:330px;top:86px;" width="14" height="15" viewBox="0 0 14 15"><rect x="2.5" y="0.5" width="10" height="10" fill="none" stroke="#444" stroke-width="1" stroke-dasharray="2 1.3" stroke-dashoffset="1"/><path d="M4 2H11.2V4.8H4ZM8 6H11.2V8.8H8ZM6 6H7.2V7.4H6Z" fill="#eda30f"/><path d="M0 8.8H3V6H5.1V8.8H8.2V11H5.1V14.2H3V11H0Z" fill="#1672e6" stroke="#d7d7d9" stroke-width="0.8" paint-order="stroke"/></svg>
<svg style="left:333px;top:113px;" width="11" height="14" viewBox="0 0 11 14"><path d="M0.3 1.8V9.4C0.3 10.5 2.5 11.3 5.25 11.3S10.2 10.5 10.2 9.4V1.8Z" fill="#6a6a6c"/><ellipse cx="5.25" cy="1.9" rx="4.95" ry="1.8" fill="#88888a"/><path d="M0.3 4.4C0.3 5.5 2.5 6.2 5.25 6.2S10.2 5.5 10.2 4.4M0.3 7C0.3 8.1 2.5 8.8 5.25 8.8S10.2 8.1 10.2 7" stroke="#d7d7d9" stroke-width="0.8" fill="none"/><path d="M5.25 11V13M2 13.4H8.5" stroke="#6a6a6c" stroke-width="1.1" fill="none"/></svg>
<svg style="left:332px;top:138px;" width="14" height="14" viewBox="0 0 14 14"><rect x="0.5" y="1" width="12.5" height="9.6" fill="#fafafa" stroke="#59595b"/><rect x="0" y="0.4" width="13.5" height="1.8" fill="#59595b"/><path d="M2.5 4.5H11M2.5 6.5H11M6 8.5H11" stroke="#59595b" stroke-width="0.9" fill="none"/><path d="M9.2 5.8L5.8 8.3L7.4 9.2L0.3 13.8L3 9.9L1.6 9.1L5.2 5.8Z" fill="#d6920c"/></svg>
<div style="left:328px;top:163px;width:18px;height:18px;border:1px solid #2b87fa;background:#c9e0fb;"></div>
<svg style="left:331px;top:166px;" width="15" height="15" viewBox="0 0 15 15"><path d="M4 11H0.6V0.6H11.6V3.4" fill="none" stroke="#59595b" stroke-width="1.1"/><circle cx="6.9" cy="7.4" r="3.7" fill="#e6f0fc" stroke="#59595b" stroke-width="1.1"/><path d="M9.6 10.2L13.6 14.2" stroke="#59595b" stroke-width="1.5"/><circle cx="6.8" cy="2.4" r="1" fill="#1e6fe0"/><path d="M5.2 4.6H8V8.6H9V9.8H4.8V8.6H5.8V5.8H5.2Z" fill="#1e6fe0"/></svg>
<svg style="left:463px;top:68px;" width="13" height="20" viewBox="0 0 13 20"><path d="M0.5 0.7V16.2L4.1 12.8L6.6 18.7L9 17.7L6.5 11.9H11.5Z" fill="#fff" stroke="#111" stroke-width="1" stroke-linejoin="miter"/></svg>
<div style="left:0px;top:0px;width:740px;height:1px;background:#fff;"></div>
<div style="left:0px;top:0px;width:1px;height:626px;background:#fff;"></div>
<div style="left:1px;top:1px;width:739px;height:1px;background:#5c5c5e;"></div>
<div style="left:1px;top:1px;width:1px;height:625px;background:#5c5c5e;"></div>
<div style="left:739px;top:1px;width:1px;height:625px;background:#5c5c5e;"></div>
<div style="left:1px;top:625px;width:739px;height:1px;background:#5c5c5e;"></div>
</div></body></html>
